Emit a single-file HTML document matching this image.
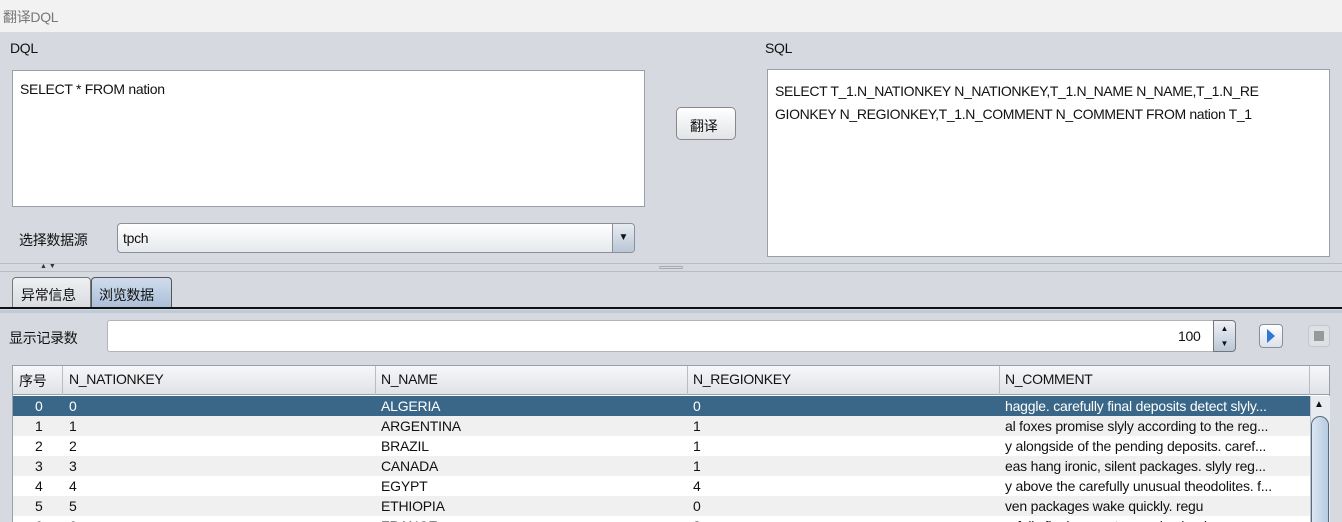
<!DOCTYPE html>
<html style="width:1342px;height:522px;overflow:hidden"><head><meta charset="utf-8"><style>
*{box-sizing:border-box;margin:0;padding:0}
body{width:1342px;height:522px;overflow:hidden;background:#d6d9df;font-family:"Liberation Sans","Noto Sans CJK SC",sans-serif;font-size:14px;color:#111;position:relative}
.a{position:absolute}
.ta{background:#fff;border:1px solid #9aa0a8}
.t{white-space:nowrap;letter-spacing:-0.3px}
.row{position:absolute;left:13px;width:1297px;height:20px;font-size:14px;line-height:20px}
.row span{position:absolute;white-space:nowrap;letter-spacing:-0.2px}
</style></head><body>
<div class="a" style="left:0;top:0;width:1342px;height:32px;background:#f2f2f2"></div>
<div class="a t" style="left:3px;top:7px;color:#777;font-size:14px">翻译DQL</div>
<div class="a t" style="left:10px;top:40px">DQL</div>
<div class="a t" style="left:765px;top:40px">SQL</div>
<div class="a ta" style="left:12px;top:70px;width:633px;height:137px"></div>
<div class="a t" style="left:20px;top:81px">SELECT * FROM nation</div>
<div class="a" style="left:676px;top:107px;width:60px;height:33px;border:1px solid #888;border-radius:5px;background:linear-gradient(#fff,#e2e4e8)"></div>
<div class="a t" style="left:690px;top:116px">翻译</div>
<div class="a ta" style="left:767px;top:69px;width:563px;height:188px"></div>
<div class="a t" style="left:775px;top:80px;line-height:23px;letter-spacing:-0.35px">SELECT T_1.N_NATIONKEY N_NATIONKEY,T_1.N_NAME N_NAME,T_1.N_RE<br>GIONKEY N_REGIONKEY,T_1.N_COMMENT N_COMMENT FROM nation T_1</div>
<div class="a t" style="left:19px;top:230px">选择数据源</div>
<div class="a" style="left:117px;top:223px;width:518px;height:30px;border:1px solid #8a909a;border-radius:4px;background:linear-gradient(#fff,#e6e8ec)"></div>
<div class="a" style="left:612px;top:224px;width:22px;height:28px;background:linear-gradient(#e8ecf2,#b9c6d6);border-left:1px solid #8a909a;border-radius:0 4px 4px 0;font-size:10px;text-align:center;line-height:28px">▼</div>
<div class="a t" style="left:123px;top:230px">tpch</div>
<div class="a" style="left:0;top:263px;width:1342px;height:1px;background:#b8bcc4"></div>
<div class="a" style="left:0;top:271px;width:1342px;height:1px;background:#b8bcc4"></div>
<div class="a" style="left:40px;top:263px;font-size:7px;color:#333;line-height:8px">▲ ▼</div>
<div class="a" style="left:659px;top:266px;width:24px;height:3px;border:1px solid #aaa;border-radius:2px"></div>
<div class="a" style="left:12px;top:277px;width:79px;height:31px;border:1px solid #777;border-bottom:none;border-radius:4px 4px 0 0;background:linear-gradient(#eef0f3,#d8dbe0)"></div>
<div class="a t" style="left:21px;top:285px">异常信息</div>
<div class="a" style="left:91px;top:277px;width:81px;height:31px;border:1px solid #555;border-bottom:none;border-radius:4px 4px 0 0;background:linear-gradient(#d0dced,#aabfd8)"></div>
<div class="a t" style="left:99px;top:285px">浏览数据</div>
<div class="a" style="left:0;top:307px;width:1342px;height:2px;background:#111"></div>
<div class="a" style="left:0;top:310px;width:1342px;height:3px;background:#bccad9"></div>
<div class="a t" style="left:9px;top:328px">显示记录数</div>
<div class="a" style="left:107px;top:320px;width:1107px;height:32px;background:#fff;border:1px solid #b0b5bd;border-radius:3px 0 0 3px"></div>
<div class="a t" style="left:1178px;top:328px">100</div>
<div class="a" style="left:1213px;top:320px;width:23px;height:32px;border:1px solid #777;border-radius:0 4px 4px 0;background:linear-gradient(#eef1f5,#b9c7d8);font-size:8px;text-align:center;line-height:15px">▲<br>▼</div>
<div class="a" style="left:1259px;top:324px;width:24px;height:24px;border:1px solid #8890a0;border-radius:4px;background:linear-gradient(#fff,#dde2ea)"></div>
<svg class="a" style="left:1265px;top:328px" width="12" height="16"><path d="M2 1 L10 8 L2 15 Z" fill="#2e78d8"/></svg>
<div class="a" style="left:1308px;top:325px;width:22px;height:22px;border:1px solid #c4c8ce;border-radius:4px;background:#dde0e5"></div>
<div class="a" style="left:1314px;top:331px;width:10px;height:10px;background:#999"></div>
<div class="a" style="left:12px;top:365px;width:1318px;height:160px;background:#fff;border:1px solid #9aa0a8"></div>
<div class="a" style="left:13px;top:366px;width:1316px;height:29px;background:linear-gradient(#f6f7f9,#dfe2e7);border-bottom:1px solid #9aa0a8"></div>
<div class="a t" style="left:19px;top:371px">序号</div>
<div class="a t" style="left:69px;top:371px">N_NATIONKEY</div>
<div class="a t" style="left:381px;top:371px">N_NAME</div>
<div class="a t" style="left:693px;top:371px">N_REGIONKEY</div>
<div class="a t" style="left:1005px;top:371px">N_COMMENT</div>
<div class="a" style="left:62px;top:366px;width:1px;height:29px;background:#b8bcc4"></div>
<div class="a" style="left:375px;top:366px;width:1px;height:29px;background:#b8bcc4"></div>
<div class="a" style="left:687px;top:366px;width:1px;height:29px;background:#b8bcc4"></div>
<div class="a" style="left:999px;top:366px;width:1px;height:29px;background:#b8bcc4"></div>
<div class="a" style="left:1309px;top:366px;width:1px;height:29px;background:#b8bcc4"></div>
<div class="row" style="top:396px;background:#3a6788;color:#fff"><span style="left:22px">0</span><span style="left:56px">0</span><span style="left:368px">ALGERIA</span><span style="left:680px">0</span><span style="left:992px">haggle. carefully final deposits detect slyly...</span></div>
<div class="row" style="top:416px;background:#f0f0f0"><span style="left:22px">1</span><span style="left:56px">1</span><span style="left:368px">ARGENTINA</span><span style="left:680px">1</span><span style="left:992px">al foxes promise slyly according to the reg...</span></div>
<div class="row" style="top:436px;background:#fff"><span style="left:22px">2</span><span style="left:56px">2</span><span style="left:368px">BRAZIL</span><span style="left:680px">1</span><span style="left:992px">y alongside of the pending deposits. caref...</span></div>
<div class="row" style="top:456px;background:#f0f0f0"><span style="left:22px">3</span><span style="left:56px">3</span><span style="left:368px">CANADA</span><span style="left:680px">1</span><span style="left:992px">eas hang ironic, silent packages. slyly reg...</span></div>
<div class="row" style="top:476px;background:#fff"><span style="left:22px">4</span><span style="left:56px">4</span><span style="left:368px">EGYPT</span><span style="left:680px">4</span><span style="left:992px">y above the carefully unusual theodolites. f...</span></div>
<div class="row" style="top:496px;background:#f0f0f0"><span style="left:22px">5</span><span style="left:56px">5</span><span style="left:368px">ETHIOPIA</span><span style="left:680px">0</span><span style="left:992px">ven packages wake quickly. regu</span></div>
<div class="row" style="top:516px;height:6px;overflow:hidden;background:#fff"><span style="left:22px">6</span><span style="left:56px">6</span><span style="left:368px">FRANCE</span><span style="left:680px">3</span><span style="left:992px">refully final requests. regular, ironi</span></div>
<div class="a" style="left:1310px;top:396px;width:20px;height:126px;background:#e8ebef;border-left:1px solid #c0c4ca"></div>
<div class="a" style="left:1314px;top:399px;font-size:10px">▲</div>
<div class="a" style="left:1311px;top:416px;width:18px;height:106px;border:1px solid #5a6b80;border-bottom:none;border-radius:9px 9px 0 0;background:linear-gradient(90deg,#dbe6f2,#b7cbe0)"></div>
</body></html>
